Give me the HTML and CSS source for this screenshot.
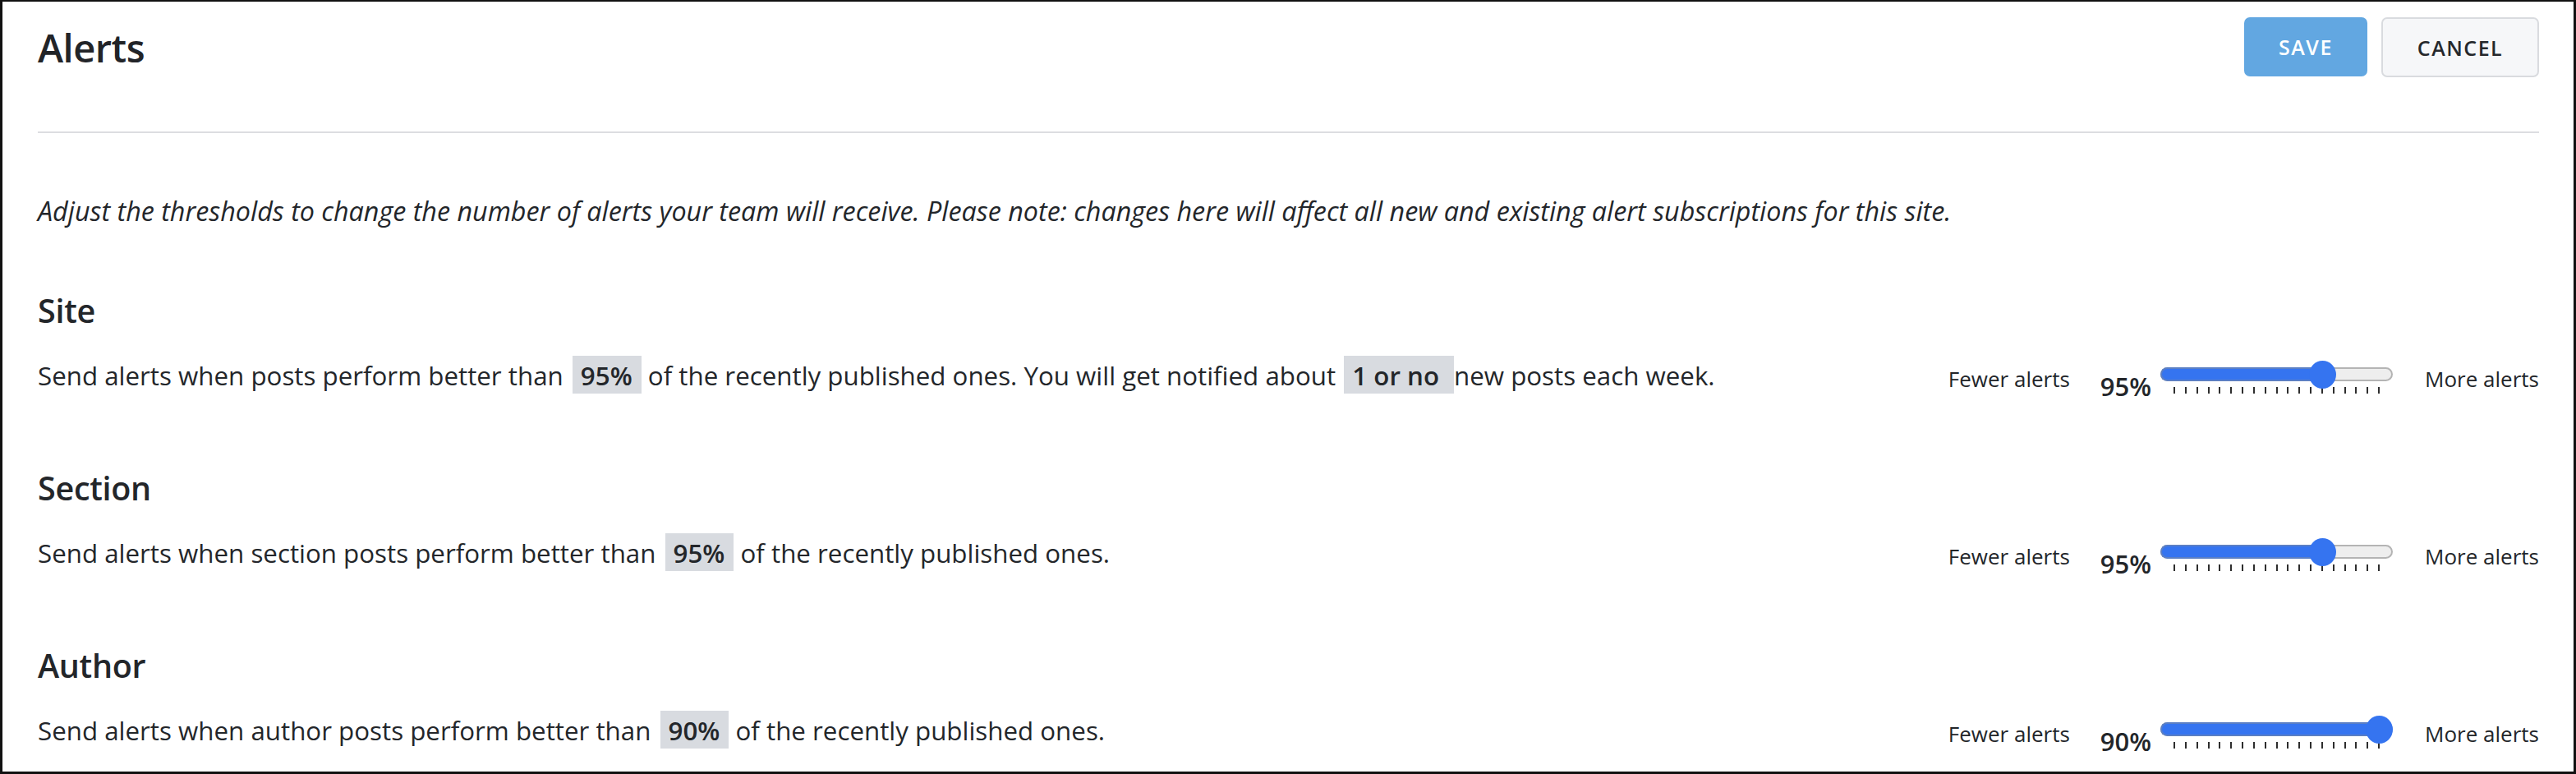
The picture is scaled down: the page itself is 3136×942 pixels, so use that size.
FILE: index.html
```html
<!DOCTYPE html>
<html lang="en">
<head>
<meta charset="utf-8">
<title>Alerts</title>
<link rel="stylesheet" href="styles.css">
</head>
<body>
<div class="page">
  <header class="header">
    <h1 class="title">Alerts</h1>
    <div class="actions">
      <button class="btn btn-save">SAVE</button>
      <button class="btn btn-cancel">CANCEL</button>
    </div>
  </header>
  <hr class="divider">
  <p class="intro">Adjust the thresholds to change the number of alerts your team will receive. Please note: changes here will affect all new and existing alert subscriptions for this site.</p>

  <section class="group">
    <h2 class="group-title">Site</h2>
    <div class="row">
      <p class="desc">Send alerts when posts perform better than <span class="hl">95%</span> of the recently published ones. You will get notified about <span class="hl hl-wide">1 or no</span>new posts each week.</p>
      <div class="control">
        <span class="label">Fewer alerts</span>
        <span class="pct">95%</span>
        <div class="slider">
          <div class="track"><div class="fill" style="--pos:197px"></div><div class="thumb" style="--pos:197px"></div></div>
          <div class="ticks"><i></i><i></i><i></i><i></i><i></i><i></i><i></i><i></i><i></i><i></i><i></i><i></i><i></i><i></i><i></i><i></i><i></i><i></i><i></i></div>
        </div>
        <span class="label label-more">More alerts</span>
      </div>
    </div>
  </section>

  <section class="group">
    <h2 class="group-title">Section</h2>
    <div class="row">
      <p class="desc">Send alerts when section posts perform better than <span class="hl">95%</span> of the recently published ones.</p>
      <div class="control">
        <span class="label">Fewer alerts</span>
        <span class="pct">95%</span>
        <div class="slider">
          <div class="track"><div class="fill" style="--pos:197px"></div><div class="thumb" style="--pos:197px"></div></div>
          <div class="ticks"><i></i><i></i><i></i><i></i><i></i><i></i><i></i><i></i><i></i><i></i><i></i><i></i><i></i><i></i><i></i><i></i><i></i><i></i><i></i></div>
        </div>
        <span class="label label-more">More alerts</span>
      </div>
    </div>
  </section>

  <section class="group">
    <h2 class="group-title">Author</h2>
    <div class="row">
      <p class="desc">Send alerts when author posts perform better than <span class="hl">90%</span> of the recently published ones.</p>
      <div class="control">
        <span class="label">Fewer alerts</span>
        <span class="pct">90%</span>
        <div class="slider">
          <div class="track"><div class="fill" style="--pos:266px"></div><div class="thumb" style="--pos:266px"></div></div>
          <div class="ticks"><i></i><i></i><i></i><i></i><i></i><i></i><i></i><i></i><i></i><i></i><i></i><i></i><i></i><i></i><i></i><i></i><i></i><i></i><i></i></div>
        </div>
        <span class="label label-more">More alerts</span>
      </div>
    </div>
  </section>
</div>
</body>
</html>
```
FILE: styles.css
```css
* { box-sizing: border-box; }
html, body { margin: 0; padding: 0; background: #fff; }
body {
  font-family: "Open Sans", "Noto Sans", "Liberation Sans", sans-serif;
  color: #23262a;
}
.page {
  width: 3136px;
  height: 942px;
  border: 3px solid #111;
  border-top-width: 2px;
  padding: 19px 42px 0 43px;
  overflow: hidden;
}
.header {
  display: flex;
  align-items: center;
  justify-content: space-between;
  height: 73px;
}
.title {
  margin: 0;
  font-size: 47px;
  font-weight: 600;
  line-height: 60px;
  letter-spacing: -0.5px;
  color: #222428;
}
.actions { display: flex; gap: 17px; }
.btn {
  font-family: "Open Sans", "Noto Sans", sans-serif;
  font-size: 25px;
  font-weight: 600;
  letter-spacing: 1.5px;
  height: 72px;
  border-radius: 7px;
  cursor: pointer;
  padding: 0;
}
.btn-save {
  width: 150px;
  background: #62a7e1;
  border: none;
  color: #fff;
}
.btn-cancel {
  width: 192px;
  height: 73px;
  background: #f6f7f9;
  border: 2px solid #d9dbdf;
  color: #25282c;
}
.divider {
  margin: 66px 0 0;
  border: 0;
  height: 2px;
  background: #dcdde1;
}
.intro {
  margin: 74px 0 0;
  font-size: 32.3px;
  line-height: 40px;
  font-style: italic;
}
.group-title {
  margin: 0;
  font-size: 39.5px;
  font-weight: 600;
  line-height: 44px;
  letter-spacing: -0.3px;
}
.group:first-of-type .group-title { margin-top: 80px; }
.group + .group .group-title { margin-top: 93px; }
.row {
  margin-top: 33px;
  height: 46px;
  display: flex;
  align-items: flex-start;
}
.desc {
  margin: 0;
  font-size: 31.3px;
  line-height: 46px;
  white-space: nowrap;
}
.hl {
  display: inline-block;
  background: #d8dbe0;
  font-weight: 600;
  line-height: 44px;
  padding: 2px 11px 0 10px;
  margin-left: 3px;
}
.hl-wide { padding-right: 18px; margin-left: 2px; }
.control {
  margin-left: auto;
  display: flex;
  align-items: flex-start;
}
.label {
  font-size: 26px;
  line-height: 30px;
  margin-top: 13px;
  white-space: nowrap;
}
.label-more { margin-left: 39px; }
.pct {
  margin-left: 37px;
  font-size: 31px;
  font-weight: 600;
  line-height: 36px;
  margin-top: 19px;
}
.slider {
  margin-left: 11px;
  margin-top: 14px;
  width: 283px;
}
.track {
  position: relative;
  height: 17px;
  border: 2px solid #b4b4b4;
  border-radius: 9px;
  background: #eeeeee;
}
.fill {
  position: absolute;
  left: -2px;
  top: -2px;
  bottom: -2px;
  width: calc(var(--pos) + 2px);
  background: #3574f0;
  border: 2px solid #5b7fc4;
  border-right: none;
  border-radius: 9px 0 0 9px;
}
.thumb {
  position: absolute;
  top: -10px;
  left: calc(var(--pos) - 18px);
  width: 33px;
  height: 34px;
  border-radius: 50%;
  background: #3574f0;
}
.ticks {
  margin-top: 7px;
  padding-left: 16px;
  width: 267px;
  height: 8px;
  display: flex;
  justify-content: space-between;
}
.ticks i {
  display: block;
  width: 2px;
  height: 8px;
  background: #2e2e2e;
}
```
